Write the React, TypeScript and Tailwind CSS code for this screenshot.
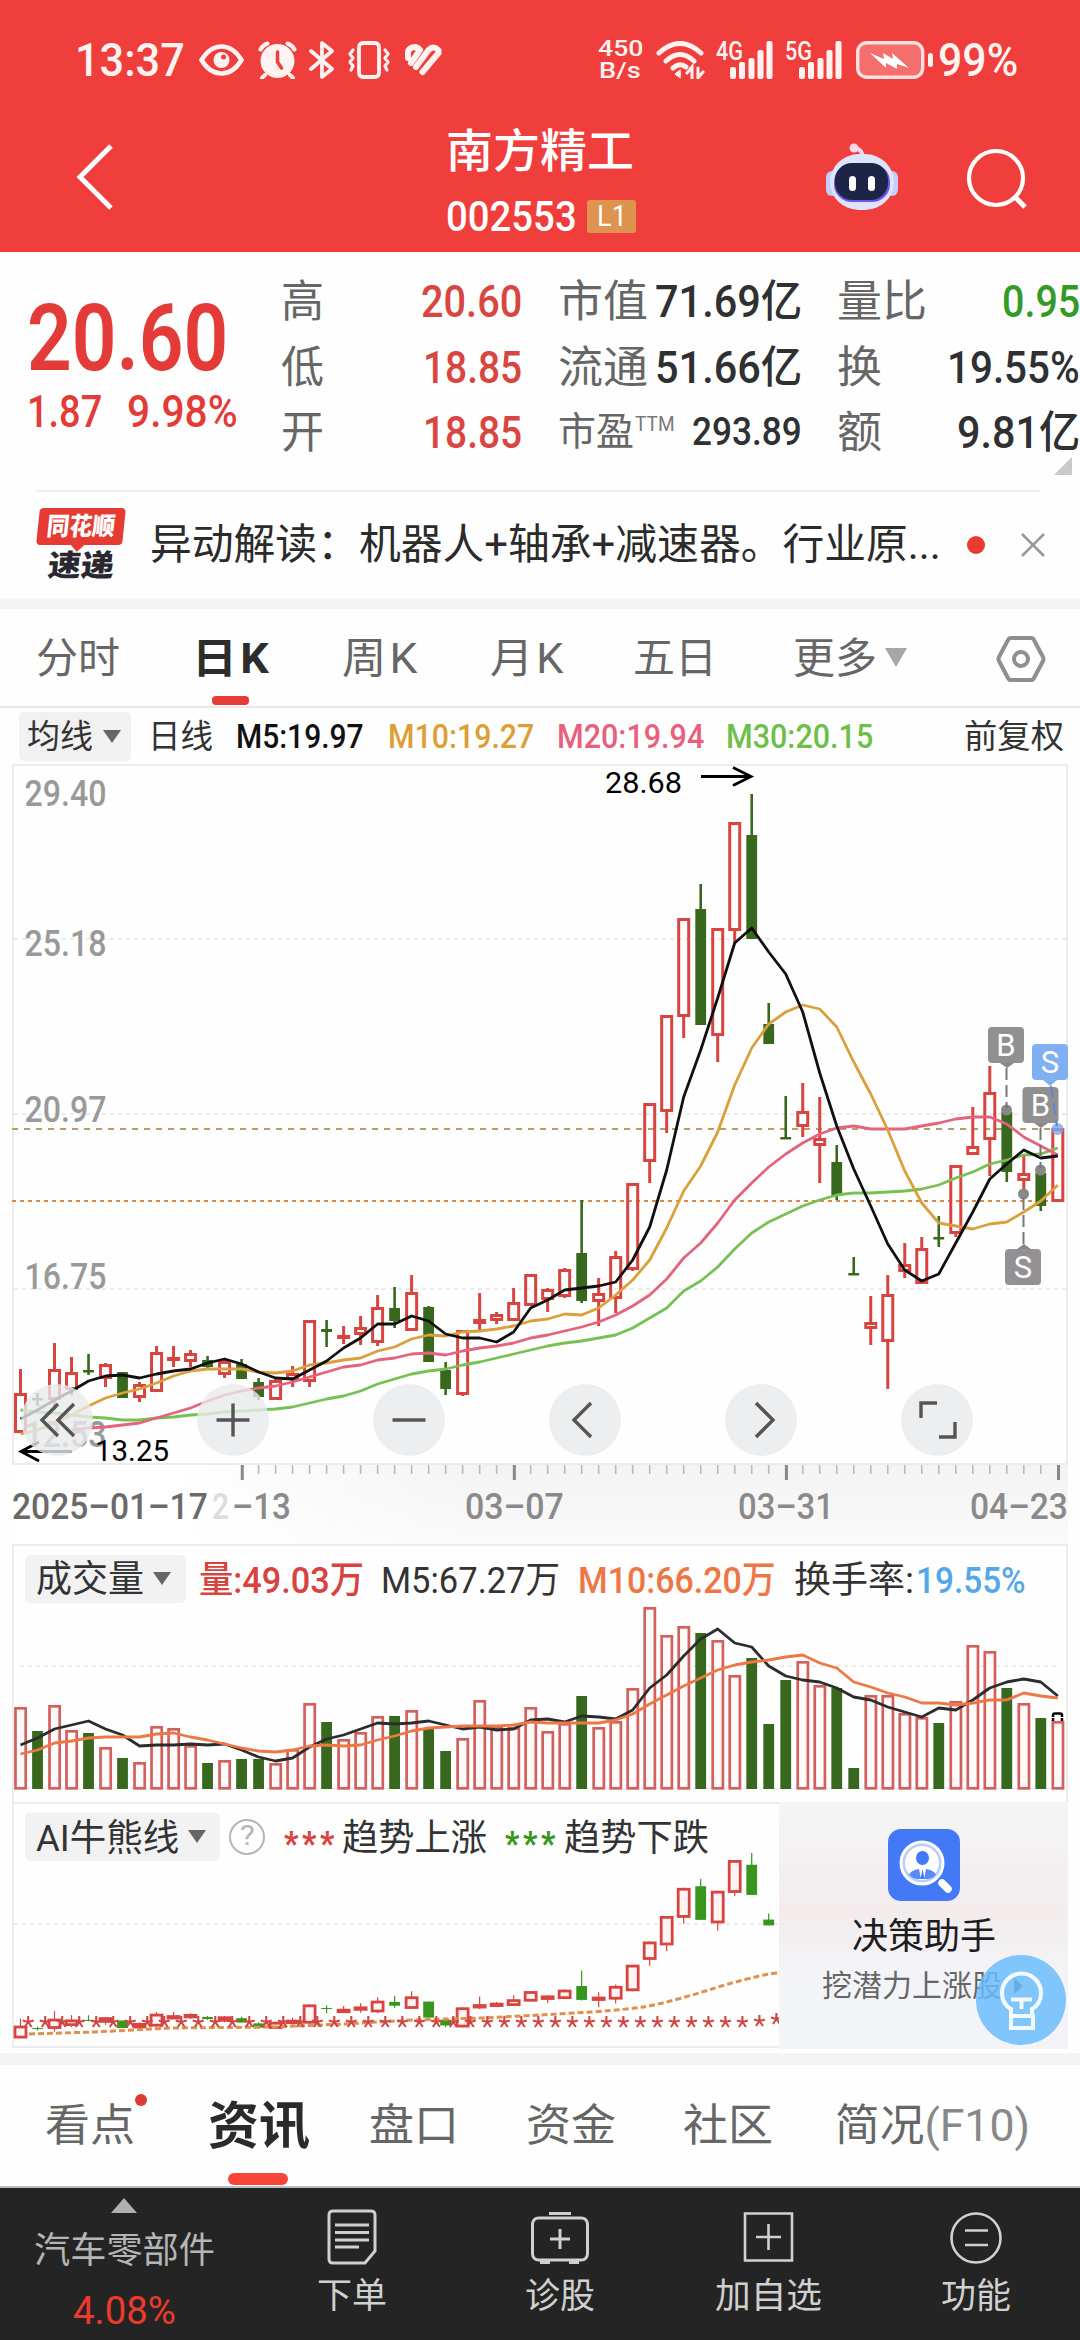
import React, { useLayoutEffect, useRef, useState } from 'react'

type Candle = ['r' | 'g', number, number, number, number]

// colour, high, body top, body bottom, low
const candles: Candle[] = [
	['r', 1369, 1393, 1433, 1433], ['g', 1393, 1398, 1400, 1406], ['r', 1343, 1369, 1400, 1410],
	['r', 1357, 1372, 1390, 1395], ['g', 1354, 1370, 1372, 1375], ['r', 1363, 1364, 1379, 1387],
	['g', 1372, 1372, 1398, 1398], ['r', 1382, 1384, 1398, 1402], ['r', 1346, 1352, 1392, 1392],
	['r', 1346, 1357, 1361, 1367], ['r', 1350, 1353, 1362, 1367], ['g', 1356, 1360, 1367, 1370],
	['r', 1360, 1361, 1375, 1378], ['g', 1359, 1364, 1379, 1379], ['g', 1378, 1382, 1397, 1400],
	['r', 1379, 1380, 1400, 1400], ['r', 1366, 1373, 1380, 1387], ['r', 1320, 1320, 1382, 1387],
	['g', 1320, 1329, 1332, 1347], ['r', 1326, 1335, 1339, 1344], ['r', 1316, 1327, 1335, 1345],
	['r', 1295, 1307, 1343, 1346], ['g', 1287, 1308, 1321, 1328], ['r', 1275, 1292, 1331, 1331],
	['g', 1306, 1307, 1362, 1362], ['g', 1362, 1370, 1389, 1395], ['r', 1330, 1330, 1395, 1396],
	['r', 1293, 1319, 1324, 1332], ['r', 1312, 1314, 1321, 1324], ['r', 1288, 1302, 1321, 1321],
	['r', 1274, 1274, 1306, 1306], ['r', 1288, 1289, 1300, 1312], ['r', 1268, 1269, 1297, 1298],
	['g', 1200, 1253, 1301, 1303], ['r', 1278, 1293, 1302, 1326], ['r', 1251, 1256, 1299, 1313],
	['r', 1183, 1183, 1270, 1271], ['r', 1103, 1103, 1162, 1183], ['r', 1015, 1015, 1112, 1133],
	['r', 918, 918, 1017, 1038], ['g', 884, 909, 1025, 1025], ['r', 928, 928, 1036, 1062],
	['r', 822, 822, 931, 943], ['g', 794, 835, 939, 939], ['g', 1003, 1024, 1044, 1044],
	['g', 1096, 1137, 1139, 1139], ['r', 1083, 1111, 1127, 1137], ['r', 1097, 1138, 1146, 1183],
	['g', 1145, 1162, 1195, 1200], ['g', 1257, 1273, 1275, 1275], ['r', 1296, 1322, 1329, 1345],
	['r', 1275, 1294, 1342, 1389], ['r', 1243, 1264, 1272, 1278], ['r', 1237, 1248, 1284, 1284],
	['g', 1216, 1237, 1239, 1247], ['r', 1165, 1165, 1234, 1237], ['r', 1107, 1146, 1155, 1155],
	['r', 1066, 1092, 1140, 1176], ['g', 1112, 1112, 1172, 1182], ['r', 1155, 1173, 1181, 1193],
	['g', 1172, 1173, 1206, 1211], ['r', 1128, 1128, 1202, 1202],
]

const ma5 = [1419, 1410, 1400, 1391, 1381, 1376, 1375, 1378, 1374, 1371, 1369, 1363, 1359, 1364, 1372, 1378, 1379, 1370, 1361, 1348, 1338, 1324, 1324, 1316, 1321, 1334, 1338, 1338, 1342, 1332, 1308, 1300, 1290, 1288, 1286, 1282, 1260, 1227, 1170, 1097, 1050, 998, 943, 928, 952, 974, 1012, 1073, 1126, 1169, 1206, 1244, 1270, 1281, 1274, 1243, 1212, 1179, 1164, 1150, 1158, 1156]
const ma10 = [1434, 1430, 1423, 1415, 1406, 1398, 1393, 1389, 1383, 1376, 1371, 1369, 1369, 1369, 1372, 1373, 1371, 1365, 1363, 1360, 1358, 1351, 1347, 1339, 1335, 1336, 1332, 1331, 1329, 1326, 1321, 1319, 1314, 1315, 1308, 1295, 1280, 1260, 1228, 1191, 1166, 1132, 1085, 1048, 1024, 1012, 1005, 1009, 1027, 1062, 1094, 1130, 1171, 1203, 1223, 1226, 1229, 1224, 1222, 1212, 1201, 1185]
const ma20 = [1430, 1428, 1427, 1425, 1423, 1418, 1413, 1408, 1401, 1395, 1391, 1388, 1386, 1382, 1377, 1372, 1367, 1365, 1360, 1358, 1354, 1353, 1355, 1351, 1348, 1346, 1343, 1338, 1335, 1331, 1327, 1322, 1315, 1306, 1295, 1279, 1258, 1243, 1223, 1200, 1183, 1167, 1154, 1143, 1134, 1128, 1126, 1129, 1129, 1129, 1126, 1123, 1119, 1117, 1117, 1124, 1137, 1146, 1155]
const ma30 = [1410, 1412, 1413, 1415, 1417, 1418, 1420, 1420, 1418, 1417, 1415, 1414, 1412, 1411, 1410, 1409, 1407, 1403, 1399, 1396, 1391, 1384, 1379, 1374, 1371, 1369, 1365, 1362, 1358, 1354, 1350, 1346, 1343, 1341, 1338, 1335, 1328, 1318, 1308, 1291, 1281, 1267, 1249, 1233, 1222, 1214, 1206, 1200, 1195, 1193, 1193, 1192, 1191, 1189, 1185, 1178, 1172, 1164, 1160, 1155, 1154, 1148]

const volumes = [1707, 1731, 1705, 1730, 1733, 1747, 1758, 1762, 1726, 1728, 1745, 1763, 1760, 1759, 1759, 1763, 1749, 1703, 1722, 1739, 1732, 1716, 1716, 1710, 1729, 1751, 1738, 1700, 1727, 1727, 1707, 1731, 1723, 1696, 1727, 1721, 1688, 1607, 1635, 1626, 1633, 1640, 1675, 1658, 1724, 1680, 1661, 1685, 1688, 1768, 1695, 1695, 1713, 1717, 1723, 1701, 1645, 1651, 1688, 1703, 1718, 1721]
const vol5 = [1745, 1738, 1729, 1725, 1721, 1729, 1735, 1746, 1745, 1745, 1744, 1745, 1744, 1750, 1757, 1761, 1758, 1747, 1739, 1735, 1729, 1723, 1724, 1723, 1721, 1725, 1729, 1727, 1730, 1729, 1720, 1719, 1722, 1716, 1717, 1719, 1710, 1688, 1675, 1656, 1639, 1629, 1643, 1647, 1666, 1676, 1680, 1682, 1688, 1697, 1700, 1707, 1712, 1717, 1708, 1710, 1700, 1688, 1682, 1679, 1682, 1696]
const vol10 = [1754, 1750, 1743, 1741, 1738, 1737, 1737, 1737, 1734, 1733, 1737, 1740, 1744, 1748, 1751, 1752, 1750, 1746, 1745, 1746, 1745, 1740, 1736, 1731, 1728, 1727, 1726, 1726, 1726, 1725, 1722, 1723, 1723, 1723, 1723, 1720, 1714, 1704, 1695, 1686, 1678, 1670, 1665, 1662, 1660, 1657, 1655, 1663, 1668, 1682, 1687, 1693, 1697, 1703, 1703, 1705, 1703, 1700, 1700, 1693, 1696, 1698]

const px = (i: number) => 20.5 + i * 17.005
const line = (ys: number[], from = 0) => ys.map((y, i) => `${px(i + from)},${y}`).join(' ')
// the trend panel reuses the daily candles on a flatter scale
const flat = (y: number) => 1860 + (y - 822) * 0.29

// Squeezes its text to the width of the box
function Fit({ className = '', children }: { className?: string; children: React.ReactNode }) {
	const ref = useRef<HTMLSpanElement>(null)
	const [k, setK] = useState(1)
	useLayoutEffect(() => {
		const el = ref.current
		if (el && el.parentElement) setK(el.parentElement.clientWidth / el.offsetWidth)
	}, [])
	return (
		<span className={`flex shrink-0 whitespace-nowrap leading-none ${className}`}>
			<span ref={ref} className="block shrink-0 origin-left" style={{ transform: `scaleX(${k})` }}>
				{children}
			</span>
		</span>
	)
}

function Signal({ label }: { label: string }) {
	return (
		<svg className="shrink-0 overflow-visible" width="58" height="38" viewBox="0 0 58 38" fill="#fff3f2">
			<text x="0" y="18.5" fontSize="25" fontWeight="500" textLength="27" lengthAdjust="spacingAndGlyphs">{label}</text>
			<rect x="14" y="26" width="6" height="12" rx="2" />
			<rect x="23" y="21" width="6" height="17" rx="2" />
			<rect x="32.500" y="17" width="6" height="21" rx="2" />
			<rect x="41.500" y="9" width="6" height="29" rx="2" />
			<rect x="50.500" y="0" width="6" height="38" rx="2" />
		</svg>
	)
}

function StatusBar() {
	return (
		<div className="flex h-[120px] items-center text-[#fff3f2]">
			<Fit className="ml-[75px] w-[110px] text-[46px] font-medium">13:37</Fit>
			<svg className="ml-[14px]" width="45" height="32" viewBox="0 0 45 32" fill="none" stroke="currentColor" strokeWidth="4.500">
				<path d="M2.500 16C8 7 14 2.500 22.500 2.500S37 7 42.500 16C37 25 31 29.500 22.500 29.500S8 25 2.500 16z" />
				<ellipse cx="22.500" cy="16" rx="8" ry="8" fill="currentColor" stroke="none" />
				<circle cx="24.500" cy="13" r="2.500" fill="#f03e3c" stroke="none" />
			</svg>
			<svg className="ml-[14px]" width="39" height="38" viewBox="0 0 39 38" fill="none" stroke="currentColor" strokeWidth="4" strokeLinecap="round">
				<circle cx="19.500" cy="20" r="17" fill="currentColor" stroke="none" />
				<path d="M2.500 8.500a12 12 0 0 1 7-6M36.500 8.500a12 12 0 0 0-7-6M7 34l-3 3M32 34l3 3" />
				<path d="M19.500 11v10l4 6" stroke="#f03e3c" strokeWidth="3.500" />
			</svg>
			<svg className="ml-[12px]" width="26" height="38" viewBox="0 0 26 38" fill="none" stroke="currentColor" strokeWidth="3.800" strokeLinejoin="round" strokeLinecap="round">
				<path d="M2 10l21 18-10 8V2l10 8L2 28" />
			</svg>
			<svg className="ml-[11px]" width="46" height="38" viewBox="0 0 46 38" fill="none" stroke="currentColor" strokeWidth="3.800" strokeLinecap="round" strokeLinejoin="round">
				<rect x="13" y="2" width="20" height="34" rx="4" />
				<path d="M7 9l-3 4 3 4-3 4 3 4-2 4M39 9l3 4-3 4 3 4-3 4 2 4" strokeWidth="3.200" />
			</svg>
			<svg className="ml-[12px]" width="38" height="32" viewBox="0 0 38 32" fill="none" stroke="currentColor" strokeWidth="6" strokeLinecap="round">
				<path d="M4 14V9c0-6 8-8 12-3M7 19L16 6M12 23L24.500 6Q30 1 34.500 6.500M18.500 28L34.500 9" />
			</svg>
			<div className="ml-[156px] flex w-[46px] flex-col">
				<Fit className="w-[46px] text-[22px] font-medium">450</Fit>
				<Fit className="ml-[1px] w-[42px] text-[22px] font-medium">B/s</Fit>
			</div>
			<svg className="ml-[12px]" width="50" height="38" viewBox="0 0 50 38" fill="none" stroke="currentColor" strokeWidth="5" strokeLinecap="round">
				<path d="M3 12Q24 -7 45 12M10 20Q24 7 38 20M17 27Q24 21 30 26" />
				<path d="M24 29l-5 4 5 4z" fill="currentColor" strokeWidth="1" />
				<path d="M36 37V26l-5 6M42 27v10l5-6" strokeWidth="3" />
			</svg>
			<div className="ml-[10px] flex gap-[11px]">
				<Signal label="4G" />
				<Signal label="5G" />
			</div>
			<svg className="ml-[13px]" width="78" height="38" viewBox="0 0 78 38" fill="none">
				<rect x="1.700" y="1.700" width="65" height="34.600" rx="9" fill="#fff" fillOpacity=".25" stroke="#ffe0de" strokeWidth="3.400" />
				<rect x="72" y="12" width="5" height="14" rx="2.500" fill="#fff3f2" />
				<path d="M14 12l14 6-1-6 10 6-1-6 17 15-12-4v5l-11-6v5z" fill="#fff" />
			</svg>
			<Fit className="ml-[4px] w-[80px] text-[46px] font-medium">99%</Fit>
		</div>
	)
}

function Header() {
	return (
		<header className="h-[252px] bg-[#f03e3c]">
			<StatusBar />
			<div className="flex h-[132px] items-start text-white">
				<svg className="mt-[24px] ml-[75px]" width="40" height="66" viewBox="0 0 40 66" fill="none" stroke="currentColor" strokeWidth="5">
					<path d="M36 2L5 33l31 31" />
				</svg>
				<div className="ml-[331px] w-[192px] pt-[8px]">
					<Fit className="w-[188px] text-[46px] font-medium">南方精工</Fit>
					<div className="mt-[21px] flex items-center">
						<Fit className="w-[131px] text-[43px] font-medium">002553</Fit>
						<div className="ml-[10px] flex h-[33px] w-[49px] items-center justify-center rounded-[3px] bg-[#de934e]">
							<Fit className="w-[30px] text-[29px]">L1</Fit>
						</div>
					</div>
				</div>
				<svg className="mt-[23px] ml-[187px]" width="74" height="68" viewBox="0 0 74 68">
					<path d="M38 14q-1-8-8-9" fill="none" stroke="#f6dcf0" strokeWidth="4" />
					<circle cx="29" cy="5" r="4.500" fill="#fbd9e6" />
					<rect x="1" y="28" width="12" height="25" rx="6" fill="#c5cdf8" />
					<rect x="61" y="28" width="12" height="25" rx="6" fill="#c5cdf8" />
					<rect x="5" y="11" width="64" height="56" rx="29" fill="#dde4fb" />
					<rect x="9" y="21" width="56" height="38" rx="18" fill="#6d54e8" />
					<rect x="10" y="20" width="53" height="37" rx="17" fill="#1d2547" />
					<rect x="24" y="33" width="7" height="15" rx="3.500" fill="#fff" />
					<rect x="43" y="33" width="7" height="15" rx="3.500" fill="#fff" />
				</svg>
				<svg className="mt-[27px] ml-[67px]" width="64" height="64" viewBox="0 0 64 64" fill="none" stroke="currentColor" strokeWidth="4.200">
					<circle cx="30" cy="31" r="27" />
					<path d="M49 50l10 10" strokeWidth="5" />
				</svg>
			</div>
		</header>
	)
}

function Quote() {
	return (
		<section className="flex h-[238px] text-[#2f3032]">
			<div className="ml-[27px] w-[253px] pt-[41px] text-[#e23b38]">
				<Fit className="w-[201px] text-[92px] font-semibold">20.60</Fit>
				<div className="mt-[5px] flex text-[44px] font-medium">
					<Fit className="w-[75px]">1.87</Fit>
					<Fit className="ml-[25px] w-[111px]">9.98%</Fit>
				</div>
			</div>
			<div className="ml-[1px] w-[242px] pt-[17px] text-[44px]">
				<div className="flex h-[66px] items-center justify-between">
					<Fit className="w-[43px] text-[#666]">高</Fit>
					<Fit className="w-[101px] font-medium text-[#d94540]">20.60</Fit>
				</div>
				<div className="flex h-[65px] items-center justify-between">
					<Fit className="w-[43px] text-[#666]">低</Fit>
					<Fit className="w-[99px] font-medium text-[#d94540]">18.85</Fit>
				</div>
				<div className="flex h-[65px] items-center justify-between">
					<Fit className="w-[43px] text-[#666]">开</Fit>
					<Fit className="w-[99px] font-medium text-[#d94540]">18.85</Fit>
				</div>
			</div>
			<div className="ml-[36px] w-[244px] pt-[17px] text-[44px]">
				<div className="flex h-[66px] items-center justify-between">
					<Fit className="w-[90px] text-[#666]">市值</Fit>
					<Fit className="w-[147px] font-medium">71.69亿</Fit>
				</div>
				<div className="flex h-[65px] items-center justify-between">
					<Fit className="w-[90px] text-[#666]">流通</Fit>
					<Fit className="w-[147px] font-medium">51.66亿</Fit>
				</div>
				<div className="flex h-[65px] items-center">
					<Fit className="w-[76px] text-[39px] text-[#666]">市盈</Fit>
					<Fit className="mb-[16px] ml-[1px] w-[40px] text-[21px] text-[#777]">TTM</Fit>
					<Fit className="ml-[17px] w-[110px] text-[39px] font-medium">293.89</Fit>
				</div>
			</div>
			<div className="ml-[35px] flex w-[243px] flex-col pt-[17px] text-[44px]">
				<div className="flex h-[66px] items-center justify-between">
					<Fit className="w-[90px] text-[#666]">量比</Fit>
					<Fit className="w-[78px] font-medium text-[#339a25]">0.95</Fit>
				</div>
				<div className="flex h-[65px] items-center justify-between">
					<Fit className="w-[45px] text-[#666]">换</Fit>
					<Fit className="w-[133px] font-medium">19.55%</Fit>
				</div>
				<div className="flex h-[65px] items-center justify-between">
					<Fit className="w-[45px] text-[#666]">额</Fit>
					<Fit className="w-[123px] font-medium">9.81亿</Fit>
				</div>
				<svg className="-mt-[8px] mr-[8px] self-end" width="18" height="18" viewBox="0 0 18 18">
					<path d="M18 0v18H0z" fill="#c9c9c9" />
				</svg>
			</div>
		</section>
	)
}

function News() {
	return (
		<section>
			<div className="ml-[36px] h-[2px] w-[1004px] bg-[#efefef]" />
			<div className="flex h-[106px] items-center">
				<div className="ml-[37px] flex h-[74px] w-[88px] flex-col items-center">
					<div className="relative flex h-[37px] w-[86px] -skew-x-6 items-center justify-center rounded-[4px] bg-[#e63b33] text-white">
						<Fit className="w-[68px] text-[25px] font-black">同花顺</Fit>
						<div className="absolute top-[33px] left-[37px] h-[9px] w-[9px] rotate-45 bg-[#e63b33]" />
					</div>
					<div className="relative mt-[6px] -skew-x-6 text-[#2a2730]">
						<Fit className="w-[66px] text-[30px] font-black">速递</Fit>
					</div>
				</div>
				<Fit className="ml-[25px] w-[791px] text-[42px] text-[#2b2b2b]">异动解读：机器人+轴承+减速器。行业原...</Fit>
				<div className="ml-[26px] h-[18px] w-[18px] rounded-full bg-[#e83a30]" />
				<svg className="ml-[35px]" width="26" height="26" viewBox="0 0 26 26" stroke="#999" strokeWidth="2.500">
					<path d="M2 2l22 22M24 2L2 24" />
				</svg>
			</div>
			<div className="h-[11px] bg-[#f4f4f4]" />
		</section>
	)
}

function Periods() {
	return (
		<nav className="flex h-[99px] items-center border-b-2 border-[#e9e9e9] pt-[2px] text-[42px] text-[#666]">
			<Fit className="ml-[36px] w-[84px]">分时</Fit>
			<div className="relative ml-[72px] text-[#2d2d2d]">
				<Fit className="w-[77px] font-bold">日<span className="ml-[3px]">K</span></Fit>
				<div className="absolute top-[58px] left-[20px] h-[9px] w-[37px] rounded-[4px] bg-[#e63b36]" />
			</div>
			<Fit className="ml-[73px] w-[75px]">周<span className="ml-[3px]">K</span></Fit>
			<Fit className="ml-[73px] w-[73px]">月<span className="ml-[3px]">K</span></Fit>
			<Fit className="ml-[70px] w-[84px]">五日</Fit>
			<Fit className="ml-[76px] w-[84px]">更多</Fit>
			<svg className="mb-[3px] ml-[8px]" width="22" height="19" viewBox="0 0 22 19"><path d="M0 0h22L11 19z" fill="#a6a6a6" /></svg>
			<svg className="ml-[89px]" width="50" height="48" viewBox="0 0 50 48" fill="none" stroke="#8f8f8f" strokeWidth="4">
				<path d="M15 3h20q2 0 3 2l9 17q1 2 0 4l-9 17q-1 2-3 2H15q-2 0-3-2L3 26q-1-2 0-4l9-17q1-2 3-2z" />
				<circle cx="25" cy="24" r="7" />
			</svg>
		</nav>
	)
}

function Averages() {
	return (
		<div className="flex h-[56px] items-center text-[33px] text-[#333]">
			<div className="ml-[19px] flex h-[49px] w-[112px] items-center rounded-[5px] bg-[#f1f1f1]">
				<Fit className="ml-[8px] w-[66px]">均线</Fit>
				<svg className="ml-[10px]" width="18" height="13" viewBox="0 0 18 13"><path d="M0 0h18L9 13z" fill="#666" /></svg>
			</div>
			<Fit className="ml-[17px] w-[65px]">日线</Fit>
			<Fit className="ml-[23px] w-[128px] font-medium text-[#111]">M5:19.97</Fit>
			<Fit className="ml-[24px] w-[146px] font-medium text-[#dc9e36]">M10:19.27</Fit>
			<Fit className="ml-[23px] w-[147px] font-medium text-[#e8607b]">M20:19.94</Fit>
			<Fit className="ml-[22px] w-[147px] font-medium text-[#6ebe4a]">M30:20.15</Fit>
			<Fit className="ml-[91px] w-[100px]">前复权</Fit>
		</div>
	)
}

function Marker({ x, y, label, fill }: { x: number; y: number; label: string; fill: string }) {
	return (
		<g>
			<rect x={x} y={y} width="36" height="36" rx="4" fill={fill} />
			<text x={x + 18} y={y + 28.5} textAnchor="middle" fontSize="31" fill="#fff">{label}</text>
		</g>
	)
}

const prices = [
	{ y: 806, text: '29.40' },
	{ y: 956, text: '25.18' },
	{ y: 1122, text: '20.97' },
	{ y: 1289, text: '16.75' },
	{ y: 1447, text: '12.53' },
]

function KLine() {
	return (
		<div className="relative mx-[12px] h-[701px] border-2 border-[#ececec]">
			<svg className="block overflow-visible" width="1052" height="697" viewBox="14 766 1052 697">
				<g stroke="#e3e3e3" strokeWidth="1.500" strokeDasharray="4 4">
					<path d="M14 939H1066M14 1114H1066M14 1289H1066" />
				</g>
				<path d="M12 1129H1066" stroke="#b79f62" strokeWidth="1.800" strokeDasharray="6 6" />
				<path d="M12 1201H1066" stroke="#d9884c" strokeWidth="2" strokeDasharray="4 4" />
				{prices.map((p) => (
					<text key={p.text} x="24.500" y={p.y} fontSize="36" fontWeight="500" fill="#999" textLength="82" lengthAdjust="spacingAndGlyphs">{p.text}</text>
				))}
				{candles.map(([c, high, top, bottom, low], i) =>
					c === 'g' ? (
						<g key={i} fill="#38681d">
							<rect x={px(i) - 1.3} y={high} width="2.600" height={low - high} />
							<rect x={px(i) - 5.4} y={top} width="10.800" height={Math.max(bottom - top, 2.5)} />
						</g>
					) : (
						<g key={i} stroke="#d84540" strokeWidth="3" fill="none">
							<path d={`M${px(i)} ${high}V${top + 1}M${px(i)} ${bottom - 1}V${low}`} />
							<rect x={px(i) - 5} y={top + 1.5} width="10" height={Math.max(bottom - top - 3, 1)} />
						</g>
					)
				)}
				<g fill="none" strokeWidth="2.800" strokeLinejoin="round">
					<polyline points={line(ma30)} stroke="#77c153" />
					<polyline points={line(ma20, 3)} stroke="#e3647c" />
					<polyline points={line(ma10)} stroke="#d9a03c" />
					<polyline points={line(ma5)} stroke="#101010" />
				</g>
				<g fill="#888">
					<circle cx="1006.500" cy="1110" r="5.500" />
					<circle cx="1040.500" cy="1170" r="5.500" />
					<circle cx="1023.500" cy="1194" r="5.500" />
					<path d="M1000 1063h14l-7 5zM1034 1123h14l-7 5zM1017 1249h14l-7-5z" />
				</g>
				<circle cx="1057.500" cy="1129" r="6" fill="#7aa6ec" fillOpacity=".8" />
				<g stroke="#777" strokeWidth="2" strokeDasharray="12 5">
					<path d="M1006.500 1068V1108M1040.500 1128V1168M1023.500 1198V1244" />
				</g>
				<Marker x={988} y={1027} label="B" fill="#909090" />
				<Marker x={1022.5} y={1087} label="B" fill="#909090" />
				<Marker x={1005} y={1249} label="S" fill="#949194" />
				<Marker x={1032} y={1044} label="S" fill="#80b0f2" />
				<path d="M1043 1080h14l-7 6z" fill="#80b0f2" />
				<path d="M1051 1086L1057 1126" stroke="#5f86cc" strokeWidth="2" strokeDasharray="12 5" />
				<g stroke="#000" strokeWidth="2.800" fill="none">
					<path d="M701 776.500h50M733 767.500l18 9-18 9" />
					<path d="M72 1451.500H21M39 1442l-18 9.500 18 9.500" />
				</g>
				<text x="605" y="793" fontSize="30" textLength="77" lengthAdjust="spacingAndGlyphs">28.68</text>
				<text x="95" y="1461" fontSize="30" textLength="74" lengthAdjust="spacingAndGlyphs">13.25</text>
			</svg>
			<div className="absolute bottom-[7px] left-[7px] flex gap-[104px]">
				{[
					'M37 20L21 36l16 16M53 20L37 36l16 16',
					'M19.500 36h33M36 19.500v33',
					'M19.500 36h33',
					'M42 19L25 36l17 17',
					'M31 19l17 17-17 17',
					'M20 34V19h16M54 38v15H38',
				].map((d) => (
					<button key={d} className="h-[72px] w-[72px] rounded-full bg-[#e9eaeb]/80">
						<svg width="72" height="72" viewBox="0 0 72 72" fill="none" stroke="#555" strokeWidth="3.400"><path d={d} /></svg>
					</button>
				))}
			</div>
		</div>
	)
}

function DateAxis() {
	const ticks = candles.map((_, i) => i).filter((i) => i > 12)
	return (
		<div className="mx-[12px] h-[79px] bg-linear-to-b from-[#f3f3f3] to-[#fafafa]">
			<div className="h-full bg-linear-to-r from-white from-15% to-transparent to-45%">
				<svg className="block" width="1056" height="18" viewBox="12 1465 1056 18">
					{ticks.map((i) => (
						<rect key={i} x={px(i) - 0.8} y="1465" width={i % 16 === 13 ? 3 : 1.600} height={i % 16 === 13 ? 15 : 9} fill={i % 16 === 13 ? '#888' : '#bbb'} />
					))}
				</svg>
				<div className="flex pt-[5px] text-[37px] font-medium text-[#8a8a8a]">
					<Fit className="w-[196px] text-[#6a6a6a]">2025–01–17</Fit>
					<Fit className="ml-[4px] w-[17px] text-[#dcdcdc]">2</Fit>
					<Fit className="ml-[3px] w-[59px]">–13</Fit>
					<Fit className="ml-[174px] w-[99px]">03–07</Fit>
					<Fit className="ml-[174px] w-[96px]">03–31</Fit>
					<Fit className="ml-[136px] w-[98px]">04–23</Fit>
				</div>
			</div>
		</div>
	)
}

function Volume() {
	return (
		<section className="mx-[12px] h-[258px] border-x-2 border-t-2 border-[#ececec] pt-[9px]">
			<div className="flex h-[47px] items-center text-[37px] font-medium text-[#333]">
				<div className="ml-[11px] flex h-[48px] w-[161px] items-center rounded-[5px] bg-[#f2f2f2]">
					<Fit className="mt-[2px] ml-[11px] w-[108px] font-normal">成交量</Fit>
					<svg className="ml-[9px]" width="18" height="13" viewBox="0 0 18 13"><path d="M0 0h18L9 13z" fill="#666" /></svg>
				</div>
				<Fit className="mt-[3px] ml-[13px] w-[165px] text-[#d8423f]">量:49.03万</Fit>
				<Fit className="mt-[3px] ml-[17px] w-[179px] font-normal">M5:67.27万</Fit>
				<Fit className="mt-[3px] ml-[18px] w-[198px] text-[#ee7645]">M10:66.20万</Fit>
				<Fit className="mt-[3px] ml-[18px] w-[120px] font-normal">换手率:</Fit>
				<Fit className="mt-[3px] ml-[2px] w-[110px] text-[#55a8e8]">19.55%</Fit>
			</div>
			<svg className="block overflow-visible" width="1052" height="200" viewBox="14 1602 1052 200">
				<path d="M20 1666H1060" stroke="#e8e8e8" strokeWidth="1.500" strokeDasharray="4 4" />
				<path d="M14 1788.500H1066" stroke="#eee" strokeWidth="1.500" />
				{volumes.map((y, i) =>
					candles[i][0] === 'g' ? (
						<rect key={i} x={px(i) - 5.4} y={y} width="10.800" height={1789 - y} fill="#38681d" />
					) : (
						<rect key={i} x={px(i) - 5} y={y + 1.3} width="10.200" height={1787 - y} fill="#fffafa" stroke="#d2605d" strokeWidth="2.700" />
					)
				)}
				<g fill="none" strokeWidth="2.800" strokeLinejoin="round">
					<polyline points={line(vol5)} stroke="#2c2c2c" />
					<polyline points={line(vol10)} stroke="#ee7746" />
				</g>
				<path d="M1053 1721v-3M1053 1717v-2q0-1.500 2-1.500h5q2 0 2 1.500v2M1062 1718v3" fill="none" stroke="#000" strokeWidth="2.500" />
			</svg>
		</section>
	)
}

function Trend() {
	return (
		<div className="h-[246px] w-[767px] border-2 border-r-0 border-[#ececec] pt-[9px]">
			<div className="flex h-[47px] items-center text-[37px] text-[#333]">
				<div className="ml-[11px] flex h-[48px] w-[195px] items-center rounded-[5px] bg-[#f2f2f2]">
					<Fit className="mt-[4px] ml-[11px] w-[143px]">AI牛熊线</Fit>
					<svg className="ml-[9px]" width="18" height="13" viewBox="0 0 18 13"><path d="M0 0h18L9 13z" fill="#666" /></svg>
				</div>
				<div className="ml-[9px] flex h-[36px] w-[36px] items-center justify-center rounded-full border-[2.500px] border-[#b5b5b5]">
					<Fit className="w-[15px] text-[27px] text-[#b5b5b5]">?</Fit>
				</div>
				<Fit className="mt-[13px] ml-[19px] w-[54px] text-[33px] font-black tracking-[4px] text-[#d8423f]">***</Fit>
				<Fit className="mt-[4px] ml-[4px] w-[145px]">趋势上涨</Fit>
				<Fit className="mt-[13px] ml-[18px] w-[54px] text-[33px] font-black tracking-[4px] text-[#38961f]">***</Fit>
				<Fit className="mt-[4px] ml-[5px] w-[145px]">趋势下跌</Fit>
			</div>
			<svg className="block overflow-visible" width="765" height="184" viewBox="14 1860 765 184">
				<path d="M14 1924H779" stroke="#e8e8e8" strokeWidth="1.500" strokeDasharray="4 4" />
				{candles.slice(0, 45).map(([c, high, top, bottom, low], i) =>
					c === 'g' ? (
						<g key={i} fill="#38961f">
							<rect x={px(i) - 0.6} y={flat(high) + 1} width="1.200" height={flat(low) - flat(high)} />
							<rect x={px(i) - 5.4} y={flat(top) + 1} width="10.800" height={Math.max(flat(bottom) - flat(top), 1)} />
						</g>
					) : (
						<g key={i} stroke="#d84540" fill="#fff4f4">
							<path d={`M${px(i)} ${flat(high)}V${flat(low) + 1}`} strokeWidth="1.200" />
							<rect x={px(i) - 5.5} y={flat(top) + 1.4} width="11" height={Math.max(flat(bottom) - flat(top) - 1.5, 1.5)} strokeWidth="2.800" />
						</g>
					)
				)}
				<path
					d="M29 2034L93 2032 172 2028 275 2027 344 2024 413 2020 482 2018 540 2015 592 2012Q630 2009 643 2007T678 1999T712 1989T747 1979T779 1973"
					fill="none" stroke="#e0904d" strokeWidth="3" strokeDasharray="6 3"
				/>
				<g fill="none" stroke="#cf4744" strokeWidth="2.100">
					{candles.slice(0, 45).map((_, i) => (
						<path key={i} d={`M${px(i) + 7.7} ${i === 44 ? 2019 : i === 43 ? 2021 : 2022}v-6m0 6l-5.500 -1.500m5.500 1.500l5.500 -1.500m-5.500 1.500l-3.500 5m3.500 -5l3.500 5`} />
					))}
				</g>
			</svg>
		</div>
	)
}

function Assistant() {
	return (
		<div className="relative flex h-[247px] w-[289px] flex-col items-center bg-linear-to-b from-[#f4f5f6] via-[#f3eced] via-45% to-[#f3f4f7] to-70% pl-[1px]">
			<svg className="mt-[27px]" width="72" height="72" viewBox="0 0 72 72">
				<rect width="72" height="72" rx="13" fill="#4379f6" />
				<path d="M54 54l6 6" stroke="#fff" strokeWidth="7.500" strokeLinecap="round" />
				<circle cx="34" cy="34" r="21" fill="#b7cdfb" stroke="#fff" strokeWidth="3" />
				<circle cx="34" cy="34" r="17" fill="#fff" />
				<ellipse cx="34.500" cy="29" rx="6.500" ry="7" fill="#4379f6" />
				<path d="M21 46q2-5 10-6l2 10h-4q-5-1-8-4zM48 46q-2-5-10-6l-2 10h4q5-1 8-4z" fill="#5a8af7" />
				<path d="M34.500 40l2 10h-4z" fill="#4379f6" />
			</svg>
			<Fit className="mt-[18px] w-[144px] text-[36px] text-[#1d1d1f]">决策助手</Fit>
			<div className="mt-[16px] flex w-[206px] items-center">
				<Fit className="ml-[1px] w-[180px] text-[30px] text-[#666]">挖潜力上涨股</Fit>
				<svg className="ml-[12px]" width="9" height="16" viewBox="0 0 9 16"><path d="M0 0l9 8-9 8z" fill="#555" /></svg>
			</div>
			<div className="absolute top-[153px] left-[197px] h-[90px] w-[90px] rounded-full bg-[#6bbcfd]/85">
				<svg width="90" height="90" viewBox="0 0 90 90" fill="none" stroke="#f2faff" strokeWidth="4">
					<path d="M35 60V54Q26 49 26 38a19.500 19.500 0 0 1 39 0Q65 49 56 54v6M35 61h22v12H35zM45.500 54V45M35 44.500h21" />
				</svg>
			</div>
		</div>
	)
}

function Tabs() {
	return (
		<nav className="flex h-[121px] items-center text-[44px] text-[#666]">
			<div className="relative ml-[45px]">
				<Fit className="w-[90px]">看点</Fit>
				<div className="absolute -top-[10px] left-[90px] h-[12px] w-[12px] rounded-full bg-[#dc3a35]" />
			</div>
			<div className="relative mt-[2px] ml-[73px] text-[#2b2b2b]">
				<Fit className="w-[102px] text-[51px] font-bold">资讯</Fit>
				<div className="absolute top-[72px] left-[20px] h-[12px] w-[60px] rounded-[6px] bg-[#f8453a]" />
			</div>
			<Fit className="ml-[59px] w-[90px]">盘口</Fit>
			<Fit className="ml-[67px] w-[90px]">资金</Fit>
			<Fit className="ml-[67px] w-[90px]">社区</Fit>
			<Fit className="ml-[62px] w-[195px]">简况<span className="text-[#888]">(F10)</span></Fit>
		</nav>
	)
}

function BottomBar() {
	return (
		<footer className="flex h-[154px] border-t-2 border-[#b9bebe] bg-[#242424] text-[36px] text-[#d0d0d0]">
			<div className="flex w-[248px] flex-col items-center pt-[10px]">
				<svg width="26" height="15" viewBox="0 0 26 15"><path d="M13 0l13 15H0z" fill="#b0b0b0" /></svg>
				<Fit className="mt-[20px] w-[181px] text-[#b5b5b5]">汽车零部件</Fit>
				<Fit className="mt-[23px] w-[103px] text-[38px] text-[#ee3a2c]">4.08%</Fit>
			</div>
			<div className="flex w-[208px] flex-col items-center pt-[21px]">
				<svg width="52" height="56" viewBox="0 0 52 56" fill="none" stroke="currentColor" strokeWidth="3">
					<path d="M7 2h38q4 0 4 4v36L39 54H7q-4 0-4-4V6q0-4 4-4z" />
					<path d="M9 16h34M9 23.500h34M9 31h34M9 38h24" />
				</svg>
				<Fit className="mt-[14px] w-[70px] text-[35px]">下单</Fit>
			</div>
			<div className="flex w-[208px] flex-col items-center pt-[21px]">
				<svg width="60" height="56" viewBox="0 0 60 56" fill="none" stroke="currentColor" strokeWidth="3">
					<rect x="2.500" y="9" width="55" height="42" rx="6" />
					<path d="M19 4.500h22M10 53.500h10M39 53.500h10M30 20v20M20 30h20" />
				</svg>
				<Fit className="mt-[14px] w-[70px] text-[35px]">诊股</Fit>
			</div>
			<div className="flex w-[208px] flex-col items-center pt-[21px]">
				<svg width="52" height="56" viewBox="0 0 52 56" fill="none" stroke="currentColor" strokeWidth="2.600">
					<path d="M3 4.500h47v47H3zM26.500 15v26M14 28h25" />
				</svg>
				<Fit className="mt-[14px] w-[107px] text-[35px]">加自选</Fit>
			</div>
			<div className="flex w-[208px] flex-col items-center pt-[21px]">
				<svg width="54" height="56" viewBox="0 0 54 56" fill="none" stroke="currentColor" strokeWidth="2.600">
					<circle cx="27" cy="29" r="24.500" />
					<path d="M16 21.500h23M16 36h23" />
				</svg>
				<Fit className="mt-[14px] w-[70px] text-[35px]">功能</Fit>
			</div>
		</footer>
	)
}

export default function App() {
	return (
		<div className="h-[2340px] w-[1080px] overflow-hidden bg-[#fefefe] font-['Roboto','Noto_Sans_CJK_SC',sans-serif]">
			<Header />
			<Quote />
			<News />
			<Periods />
			<Averages />
			<KLine />
			<DateAxis />
			<Volume />
			<div className="ml-[12px] flex h-[251px]">
				<Trend />
				<Assistant />
			</div>
			<div className="h-[12px] bg-[#f4f4f4]" />
			<Tabs />
			<BottomBar />
		</div>
	)
}
